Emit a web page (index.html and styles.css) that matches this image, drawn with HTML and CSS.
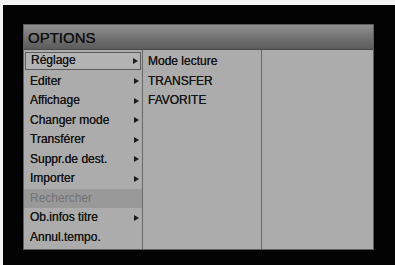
FILE: index.html
```html
<!DOCTYPE html>
<html>
<head>
<meta charset="utf-8">
<link rel="stylesheet" href="styles.css">
</head>
<body>
<div class="screen">
  <div class="panel">
    <div class="title">OPTIONS</div>
    <div class="cols">
      <div class="col col1">
        <div class="row sel">Réglage<span class="arr"></span></div>
        <div class="row">Editer<span class="arr"></span></div>
        <div class="row">Affichage<span class="arr"></span></div>
        <div class="row">Changer mode<span class="arr"></span></div>
        <div class="row">Transférer<span class="arr"></span></div>
        <div class="row">Suppr.de dest.<span class="arr"></span></div>
        <div class="row">Importer<span class="arr"></span></div>
        <div class="row dis">Rechercher</div>
        <div class="row">Ob.infos titre<span class="arr"></span></div>
        <div class="row">Annul.tempo.</div>
      </div>
      <div class="col col2">
        <div class="row">Mode lecture</div>
        <div class="row">TRANSFER</div>
        <div class="row">FAVORITE</div>
      </div>
      <div class="col col3"></div>
    </div>
  </div>
</div>
</body>
</html>
```
FILE: styles.css
```css
html, body {
  margin: 0;
  padding: 0;
  background: #f4f4f4;
}
.screen {
  margin: 5px 0 0 3px;
  width: 392px;
  height: 260px;
  background: #030303;
  padding: 19px 0 0 20px;
  box-sizing: border-box;
}
.panel {
  width: 351px;
  height: 226px;
  box-sizing: border-box;
  border: 1px solid #5e5e5e;
  background: #acacac;
  display: flex;
  flex-direction: column;
  font-family: "Liberation Sans", Arial, sans-serif;
  color: #161616;
}
.title {
  height: 25px;
  box-sizing: border-box;
  background: linear-gradient(#909090, #6e6e6e 60%, #5c5c5c);
  border-bottom: 1px solid #4a4a4a;
  font-size: 15px;
  line-height: 25px;
  padding-left: 4px;
  color: #111111;
  text-shadow: 0 0 0.4px #111;
}
.cols {
  flex: 1;
  display: flex;
}
.col {
  padding-top: 2px;
}
.col1 {
  width: 118px;
  border-right: 1px solid #686868;
}
.col2 {
  width: 118px;
  border-right: 1px solid #686868;
}
.col3 {
  flex: 1;
}
.row {
  height: 19.5px;
  line-height: 19.5px;
  font-size: 12px;
  padding-left: 6px;
  padding-right: 3px;
  display: flex;
  align-items: center;
  justify-content: space-between;
  box-sizing: border-box;
  white-space: nowrap;
  text-shadow: 0 0 0.3px #161616;
}
.col2 .row {
  padding-left: 5px;
}
.row.sel {
  margin: 0 1px 0 1px;
  padding-left: 5px;
  padding-right: 2px;
  border: 1px solid #5c5c5c;
  background: #b3b3b3;
  height: 18px;
  margin-bottom: 1.5px;
}
.row.dis {
  background: #999999;
  color: #737373;
  text-shadow: none;
}
.arr {
  width: 0;
  height: 0;
  border-left: 5px solid #1a1a1a;
  border-top: 3px solid transparent;
  border-bottom: 3px solid transparent;
}
```
